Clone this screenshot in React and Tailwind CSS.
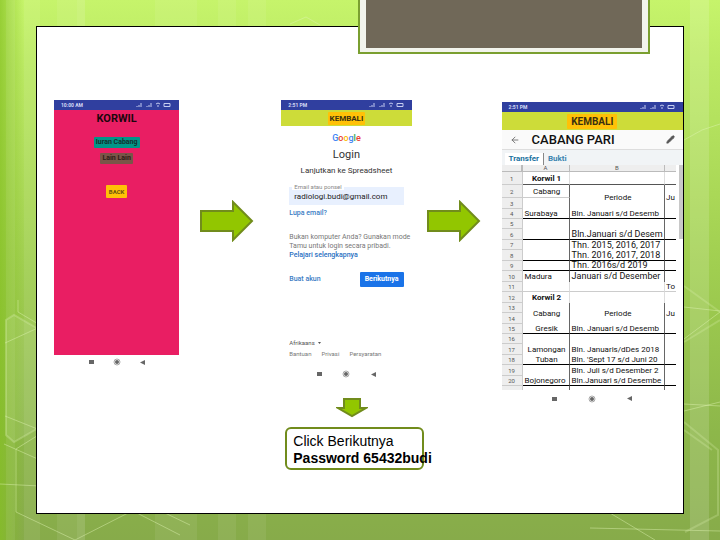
import React from 'react';
import { ArrowLeft, Pencil } from 'lucide-react';

const rows = [
  { n: 1, h: 'h-[13px]', a: 'Korwil 1', bold: true, b: '', c: '', rule: true },
  { n: 2, h: 'h-[13px]', a: 'Cabang', center: true, b: 'Periode', span: true, c: 'Ju', line: true, thinA: true },
  { n: 3, h: 'h-[11px]', a: '', skip: true, line: true },
  { n: 4, h: 'h-[10px]', a: 'Surabaya', b: 'Bln. Januari s/d Desemb', c: '', thick: true, line: true },
  { n: 5, h: 'h-[10px]', a: '', b: '', c: '', line: true },
  { n: 6, h: 'h-[11px]', a: '', b: 'Bln.Januari s/d Desem', c: '', thick: true, line: true, big: true },
  { n: 7, h: 'h-[10px]', a: '', b: 'Thn. 2015, 2016, 2017', c: '', line: true, big: true },
  { n: 8, h: 'h-[11px]', a: '', b: 'Thn. 2016, 2017, 2018', c: '', thick: true, line: true, big: true },
  { n: 9, h: 'h-[10px]', a: '', b: 'Thn. 2016s/d 2019', c: '', thick: true, line: true, big: true },
  { n: 10, h: 'h-[11px]', a: 'Madura', b: 'Januari s/d Desember', c: '', line: true, big: true },
  { n: 11, h: 'h-[10px]', a: '', b: '', c: 'To', thin: true },
  { n: 12, h: 'h-[11px]', a: 'Korwil 2', bold: true, b: '', c: '' },
  { n: 13, h: 'h-[10px]', a: 'Cabang', center: true, spanA: true, b: 'Periode', span: true, c: 'Ju', line: true },
  { n: 14, h: 'h-[11px]', skip: true, skipA: true },
  { n: 15, h: 'h-[10px]', a: 'Gresik', center: true, b: 'Bln. Januari s/d Desemb', c: '', thick: true, line: true },
  { n: 16, h: 'h-[10px]', a: '', b: '', c: '', line: true },
  { n: 17, h: 'h-[11px]', a: 'Lamongan', center: true, b: 'Bln. Januaris/dDes 2018', c: '', line: true },
  { n: 18, h: 'h-[10px]', a: 'Tuban', center: true, b: "Bln. 'Sept 17 s/d Juni 20", c: '', thick: true, line: true },
  { n: 19, h: 'h-[11px]', a: '', b: 'Bln. Juli s/d Desember 2', c: '', line: true },
  { n: 20, h: 'h-[10px]', a: 'Bojonegoro', b: 'Bln.Januari s/d Desembe', c: '', thick: true, line: true },
];

function Backdrop() {
  return (
    <svg className="absolute inset-0 w-full h-full" viewBox="0 0 720 540" preserveAspectRatio="none" aria-hidden="true">
      <defs>
        <linearGradient id="base" x1="0" y1="0" x2="0" y2="1">
          <stop offset="0" stopColor="#c6f46b" />
          <stop offset="0.12" stopColor="#bbe963" />
          <stop offset="0.5" stopColor="#a0ce50" />
          <stop offset="0.8" stopColor="#8db74a" />
          <stop offset="1" stopColor="#87ab4a" />
        </linearGradient>
        <linearGradient id="edge" x1="0" y1="0" x2="1" y2="0">
          <stop offset="0" stopColor="#84c020" stopOpacity="0.7" />
          <stop offset="1" stopColor="#84c020" stopOpacity="0" />
        </linearGradient>
      </defs>
      <rect width="720" height="540" fill="url(#base)" />
      <rect width="24" height="540" fill="url(#edge)" />
      <g fill="#fff" fillOpacity="0.07">
        <rect x="6" width="9" height="540" />
        <rect x="24" width="16" height="540" />
        <rect x="57" width="28" height="540" />
        <rect x="77" width="8" height="540" />
        <rect x="155" width="42" height="540" />
        <rect x="218" width="18" height="540" />
        <rect x="248" width="18" height="540" />
        <rect x="690" width="19" height="540" fillOpacity="0.14" />
      </g>
      <g fill="none" stroke="#dff3b4" strokeOpacity="0.45">
        <path fill="#fff" fillOpacity="0.08" strokeWidth="2" strokeOpacity="0.3" d="M40 330 14 315 6 320V435L14 442 40 427Z" />
        <path d="M5 343 40 327M5 416 40 430M4 444 40 460M40 434 16 449V512L75 540 128 513M0 484 40 486M18 300V312L40 325M137 513 180 535M165 513 190 525" />
        <path d="M684 307 720 311M684 339 720 312M684 411 720 402M684 404 720 406M610 513 655 540M590 528 720 531" />
        <path strokeWidth="2" strokeOpacity="0.25" d="M684 286 720 312M684 342 720 320M684 422 718 450V515L685 532M684 430 712 450" />
        <path d="M684 140 702 130 720 124M290 24 306 17 320 25" />
      </g>
    </svg>
  );
}

function Signal() {
  return (
    <svg className="w-[36px] h-[6px]" viewBox="0 0 36 6" fill="none" stroke="#c5cdf0" aria-hidden="true">
      <path d="M1 5V4M3 5V3M5 5V1M11 5V4M13 5V3M15 5V1M20 2Q22 0 24 2M21 4H23M28 1.5H34V4.5H28Z" />
    </svg>
  );
}

function StatusBar({ time }) {
  return (
    <div className="h-[10px] bg-[#303f9f] flex items-center justify-between px-[7px] text-[5px] leading-[10px] font-bold text-[#d6dbf5]">
      <span>{time}</span>
      <Signal />
    </div>
  );
}

function NavBar({ className }) {
  return (
    <div className={`flex items-center justify-between ${className}`} aria-hidden="true">
      <span className="w-[5px] h-[4px] bg-[#666]" />
      <svg className="w-[8px] h-[8px]" viewBox="0 0 8 8">
        <circle cx="4" cy="4" r="2" fill="#666" />
        <circle cx="4" cy="4" r="3" fill="none" stroke="#888" strokeWidth="0.7" />
      </svg>
      <svg className="w-[5px] h-[5px]" viewBox="0 0 5 5">
        <path d="M5 0V5L0 2.5Z" fill="#666" />
      </svg>
    </div>
  );
}

function RightArrow() {
  return (
    <svg className="w-[54px] h-[42px] shrink-0 mt-[100px]" viewBox="0 0 54 42" aria-hidden="true">
      <path d="M1 11H33V2L52 21 33 40V31H1Z" fill="#92c600" stroke="#718c1c" strokeWidth="2" />
    </svg>
  );
}

function MenuPhone() {
  return (
    <section className="flex-[125] min-w-0">
      <div className="bg-[#e91e63] h-[255px]">
        <StatusBar time="10:00 AM" />
        <div className="flex flex-col items-center">
          <h1 className="mt-[2px] text-[11px] leading-[14px] font-bold text-[#1c060d]">KORWIL</h1>
          <button className="mt-[11px] h-[11px] px-[2px] rounded-[1px] bg-[#009688] text-[7px] leading-[11px] font-bold text-[#14312e]">Iuran Cabang</button>
          <button className="mt-[5px] h-[11px] px-[2px] rounded-[1px] bg-[#795548] text-[7px] leading-[11px] font-bold text-[#2e1c17]">Lain Lain</button>
          <button className="mt-[21px] h-[13px] w-[21px] rounded-[1px] bg-[#ffc107] text-[6px] leading-[13px] font-bold text-[#6b5410]">BACK</button>
        </div>
      </div>
      <NavBar className="mx-auto mt-[3px] w-[56px] h-[8px]" />
    </section>
  );
}

function LoginPhone() {
  return (
    <section className="flex-[130] min-w-0">
      <StatusBar time="2:51 PM" />
      <div className="h-[16px] bg-[#cddc39] flex items-center justify-center">
        <button className="h-[13px] px-[2px] rounded-[1px] bg-[#ffc107] text-[8px] leading-[13px] font-bold text-[#3a3110]">KEMBALI</button>
      </div>
      <form className="px-[8px] text-[#333]" onSubmit={(e) => e.preventDefault()}>
        <div className="mt-[6px] text-center text-[9px] leading-[12px] font-medium">
          <span className="text-[#4285f4]">G</span>
          <span className="text-[#ea4335]">o</span>
          <span className="text-[#fbbc05]">o</span>
          <span className="text-[#4285f4]">g</span>
          <span className="text-[#34a853]">l</span>
          <span className="text-[#ea4335]">e</span>
        </div>
        <h2 className="mt-[3px] text-center text-[11px] leading-[16px]">Login</h2>
        <p className="mt-[3px] text-center text-[8px] leading-[10px] whitespace-nowrap">Lanjutkan ke Spreadsheet</p>
        <div className="relative mt-[11px]">
          <label htmlFor="email" className="absolute left-[3px] -top-[4px] px-[2px] bg-white text-[6px] leading-[7px] text-[#888]">Email atau ponsel</label>
          <input id="email" type="text" defaultValue="radiologi.budi@gmail.com" className="block w-full h-[18px] pl-[5px] bg-[#e8f0fe] text-[8px] text-[#222]" />
        </div>
        <a href="#lupa" className="block mt-[3px] text-[7px] leading-[10px] font-medium text-[#3b7cc4]">Lupa email?</a>
        <p className="mt-[15px] text-[7px] leading-[9px] text-[#777] whitespace-nowrap">
          Bukan komputer Anda? Gunakan mode
          <br />
          Tamu untuk login secara pribadi.
          <br />
          <a href="#pelajari" className="font-medium text-[#2a70c2]">Pelajari selengkapnya</a>
        </p>
        <div className="mt-[12px] flex items-center justify-between">
          <a href="#akun" className="text-[7px] font-medium text-[#3b7cc4]">Buat akun</a>
          <button className="h-[15px] w-[44px] rounded-[1px] bg-[#1a73e8] text-[7px] leading-[15px] font-bold text-white">Berikutnya</button>
        </div>
        <div className="mt-[51px] flex items-center gap-[3px] text-[6px] leading-[10px] text-[#555]">
          <select aria-label="Bahasa" className="appearance-none h-[10px] leading-[10px]">
            <option>Afrikaans</option>
          </select>
          <svg className="w-[3px] h-[3px]" viewBox="0 0 3 3" aria-hidden="true">
            <path d="M0 0H3L1.5 2Z" fill="#555" />
          </svg>
        </div>
        <nav className="mt-[2px] flex gap-[10px] text-[6px] leading-[8px] text-[#777]">
          <a href="#bantuan">Bantuan</a>
          <a href="#privasi">Privasi</a>
          <a href="#persyaratan">Persyaratan</a>
        </nav>
      </form>
      <NavBar className="mx-auto mt-[12px] w-[59px] h-[8px]" />
      <svg className="ml-[55px] mt-[20px] w-[32px] h-[20px]" viewBox="0 0 32 20" aria-hidden="true">
        <path d="M8 1H24V10H30L16 18 2 10H8Z" fill="#92c600" stroke="#718c1c" strokeWidth="2" />
      </svg>
      <div className="mt-[9px] ml-[4px] w-[139px] h-[43px] pl-[6px] pt-[4px] rounded-[6px] border-2 border-[#718c1c] font-['Liberation_Sans',sans-serif] text-[14px] leading-[17px] text-black whitespace-nowrap">
        <p>Click Berikutnya</p>
        <p className="font-bold">Password 65432budi</p>
      </div>
    </section>
  );
}

function bottomEdge(row) {
  if (row.thick) return 'border-b border-b-black';
  if (row.rule) return 'border-b border-b-[#555]';
  if (row.thin) return 'border-b border-b-[#ccc]';
  return '';
}

function Row({ row }) {
  const edge = bottomEdge(row);
  const side = row.line ? 'border-r border-r-[#666]' : 'border-r border-r-[#ddd]';
  return (
    <tr className={row.h}>
      <th className="p-0 bg-[#eee] border-b border-r border-[#ccc] text-center text-[6px] leading-[9px] font-normal text-[#555]">{row.n}</th>
      {!row.skipA && (
        <td
          rowSpan={row.spanA ? 2 : 1}
          className={`p-0 pl-[2px] ${row.thinA ? 'border-b border-b-[#ccc]' : edge} ${side} ${row.bold ? 'font-bold text-center' : ''} ${row.center ? 'text-center' : ''}`}
        >
          {row.a}
        </td>
      )}
      {!row.skip && (
        <>
          <td
            rowSpan={row.span ? 2 : 1}
            className={`p-0 pl-[2px] ${edge} ${side} ${row.span ? 'text-center' : ''} ${row.big ? 'text-[9px]' : ''}`}
          >
            {row.b}
          </td>
          <td rowSpan={row.span ? 2 : 1} className={`p-0 pl-[1px] ${edge}`}>{row.c}</td>
        </>
      )}
    </tr>
  );
}

function SheetPhone() {
  return (
    <section className="flex-[181] min-w-0 mt-[2px]">
      <StatusBar time="2:51 PM" />
      <div className="h-[18px] bg-[#cddc39] flex items-center justify-center">
        <button className="h-[15px] w-[50px] rounded-[1px] bg-[#ffc107] text-[10px] leading-[15px] font-bold text-[#3a3110]">KEMBALI</button>
      </div>
      <header className="h-[20px] px-[8px] bg-[#fafafa] border-b border-[#ddd] flex items-center">
        <button aria-label="Kembali">
          <ArrowLeft className="w-[10px] h-[10px] text-[#666]" />
        </button>
        <h2 className="ml-[12px] flex-1 text-[13px] leading-[18px] font-medium text-[#111]">CABANG PARI</h2>
        <button aria-label="Edit">
          <Pencil className="w-[9px] h-[9px] text-[#555]" fill="currentColor" />
        </button>
      </header>
      <nav className="h-[15px] pl-[3px] pt-[3px] bg-[#f1f4f6] flex text-[8px] leading-[12px] font-bold">
        <a href="#transfer" className="px-[4px] bg-white border-r border-[#888] text-[#1a73a0]">Transfer</a>
        <a href="#bukti" className="px-[4px] text-[#3c84b0]">Bukti</a>
      </nav>
      <div className="h-[225px] overflow-hidden flex items-start">
        <div className="flex-1 min-w-0">
          <table className="w-full table-fixed border-separate border-spacing-0 text-[8px] leading-[9px] text-[#111] whitespace-nowrap">
            <colgroup>
              <col className="w-[21px]" />
              <col className="w-[47px]" />
              <col />
              <col className="w-[11px]" />
            </colgroup>
            <thead>
              <tr className="h-[7px] bg-[#eee] text-[6px] leading-[6px] text-[#555]">
                <th className="p-0 border-r-2 border-b border-[#bbb]"></th>
                <th className="p-0 border-r border-b border-[#bbb] font-normal">A</th>
                <th className="p-0 border-r border-b border-[#bbb] font-normal">B</th>
                <th className="p-0 border-b border-[#bbb]"></th>
              </tr>
            </thead>
            <tbody>
              {rows.map((row) => (
                <Row key={row.n} row={row} />
              ))}
              <tr className="h-[4px]">
                <th className="p-0 bg-[#eee] border-r border-[#ccc]"></th>
                <td className="p-0 border-r border-[#666]"></td>
                <td className="p-0 border-r border-[#666]"></td>
                <td className="p-0"></td>
              </tr>
            </tbody>
          </table>
        </div>
        <div className="ml-[3px] w-[4px] h-[74px] bg-[#c8c8c8]" />
      </div>
      <NavBar className="ml-[50px] mt-[4px] w-[80px] h-[9px]" />
    </section>
  );
}

export default function App() {
  return (
    <div className="relative min-h-screen flex px-[36px] py-[26px] font-[Roboto,sans-serif]">
      <Backdrop />
      <main className="relative flex-1 min-w-0 flex items-start border border-black bg-white pl-[17px] pt-[73px]">
        <MenuPhone />
        <div className="pl-[21px] pr-[27px] flex shrink-0">
          <RightArrow />
        </div>
        <LoginPhone />
        <div className="pl-[15px] pr-[21px] flex shrink-0">
          <RightArrow />
        </div>
        <SheetPhone />
      </main>
      <div className="absolute top-0 right-[70px] w-[292px] h-[54px] border-2 border-t-0 border-[#7a9f30] bg-[#f2f4ec] px-[6px] pb-[4px]">
        <div className="h-full bg-[#706858]" />
      </div>
    </div>
  );
}
